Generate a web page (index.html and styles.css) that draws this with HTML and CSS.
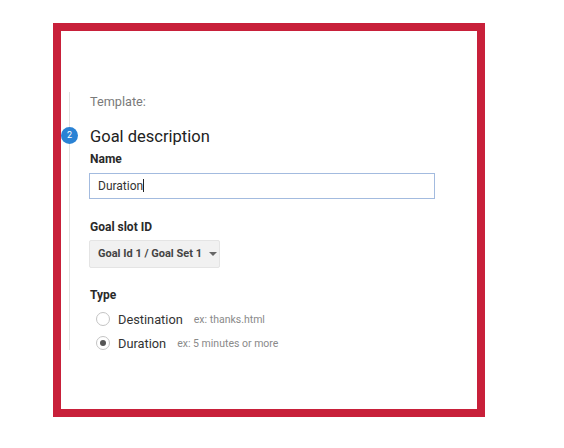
FILE: index.html
```html
<!DOCTYPE html>
<html>
<head>
<meta charset="utf-8">
<link rel="stylesheet" href="styles.css">
</head>
<body>
<div class="frame">
  <div class="step">
    <span class="badge">2</span>
    <div class="template">Template:</div>
    <div class="title">Goal description</div>
    <div class="label first">Name</div>
    <div class="input">Duration<span class="caret"></span></div>
    <div class="label slot">Goal slot ID</div>
    <div class="select">Goal Id 1 / Goal Set 1<span class="arrow"></span></div>
    <div class="label type">Type</div>
    <div class="options">
      <div class="option"><span class="radio"></span><span class="opt">Destination</span><span class="hint">ex: thanks.html</span></div>
      <div class="option"><span class="radio checked"></span><span class="opt">Duration</span><span class="hint">ex: 5 minutes or more</span></div>
    </div>
  </div>
</div>
</body>
</html>
```
FILE: styles.css
```css
html, body {
  margin: 0;
  padding: 0;
  background: #fff;
}
body {
  font-family: Roboto, "Liberation Sans", Arial, sans-serif;
  color: #222;
}
.frame {
  margin: 23px 0 0 53px;
  width: 416px;
  height: 378px;
  border: 8px solid #c8203a;
}
.step {
  position: relative;
  margin: 61px 0 0 8px;
  padding: 2px 0 0 20px;
  border-left: 1px solid #e2e2e2;
  height: 256px;
}
.badge {
  position: absolute;
  left: -9px;
  top: 35px;
  width: 17px;
  height: 17px;
  border-radius: 50%;
  background: #2a82d4;
  color: #fff;
  font-size: 9px;
  line-height: 17px;
  text-align: center;
}
.template {
  font-size: 12.7px;
  line-height: 16px;
  color: #7a7a7a;
}
.title {
  margin-top: 16px;
  font-size: 16.5px;
  line-height: 22px;
  color: #222;
}
.label {
  font-size: 12px;
  line-height: 16px;
  font-weight: 700;
  color: #2a2a2a;
}
.label.first { margin-top: 3px; }
.input {
  margin: 6px 0 0 -1px;
  width: 336px;
  height: 24px;
  border: 1px solid #a3bbdf;
  padding-left: 8px;
  font-size: 12px;
  line-height: 24px;
  color: #333;
}
.caret {
  display: inline-block;
  width: 1px;
  height: 13px;
  background: #222;
  vertical-align: -2px;
}
.label.slot { margin-top: 20px; }
.select {
  margin: 5px 0 0 -1px;
  width: 121px;
  height: 26px;
  padding-left: 8px;
  border: 1px solid #e4e4e4;
  border-radius: 2px;
  background: #f1f1f1;
  font-size: 11px;
  font-weight: 700;
  line-height: 26px;
  color: #444;
  display: flex;
  align-items: center;
  gap: 7px;
}
.arrow {
  width: 0;
  height: 0;
  border-left: 4px solid transparent;
  border-right: 4px solid transparent;
  border-top: 4px solid #666;
}
.label.type { margin-top: 19px; }
.options {
  margin-top: 4px;
  margin-left: 6px;
}
.option {
  height: 24px;
  display: flex;
  align-items: center;
}
.radio {
  width: 12px;
  height: 12px;
  border: 1px solid #c4c4c4;
  border-radius: 50%;
  margin-right: 8px;
  position: relative;
}
.radio.checked::after {
  content: "";
  position: absolute;
  left: 3px;
  top: 3px;
  width: 6px;
  height: 6px;
  border-radius: 50%;
  background: #555;
}
.opt {
  font-size: 12.8px;
  color: #333;
  margin-right: 11px;
}
.hint {
  font-size: 10.5px;
  color: #8a8a8a;
}
```
